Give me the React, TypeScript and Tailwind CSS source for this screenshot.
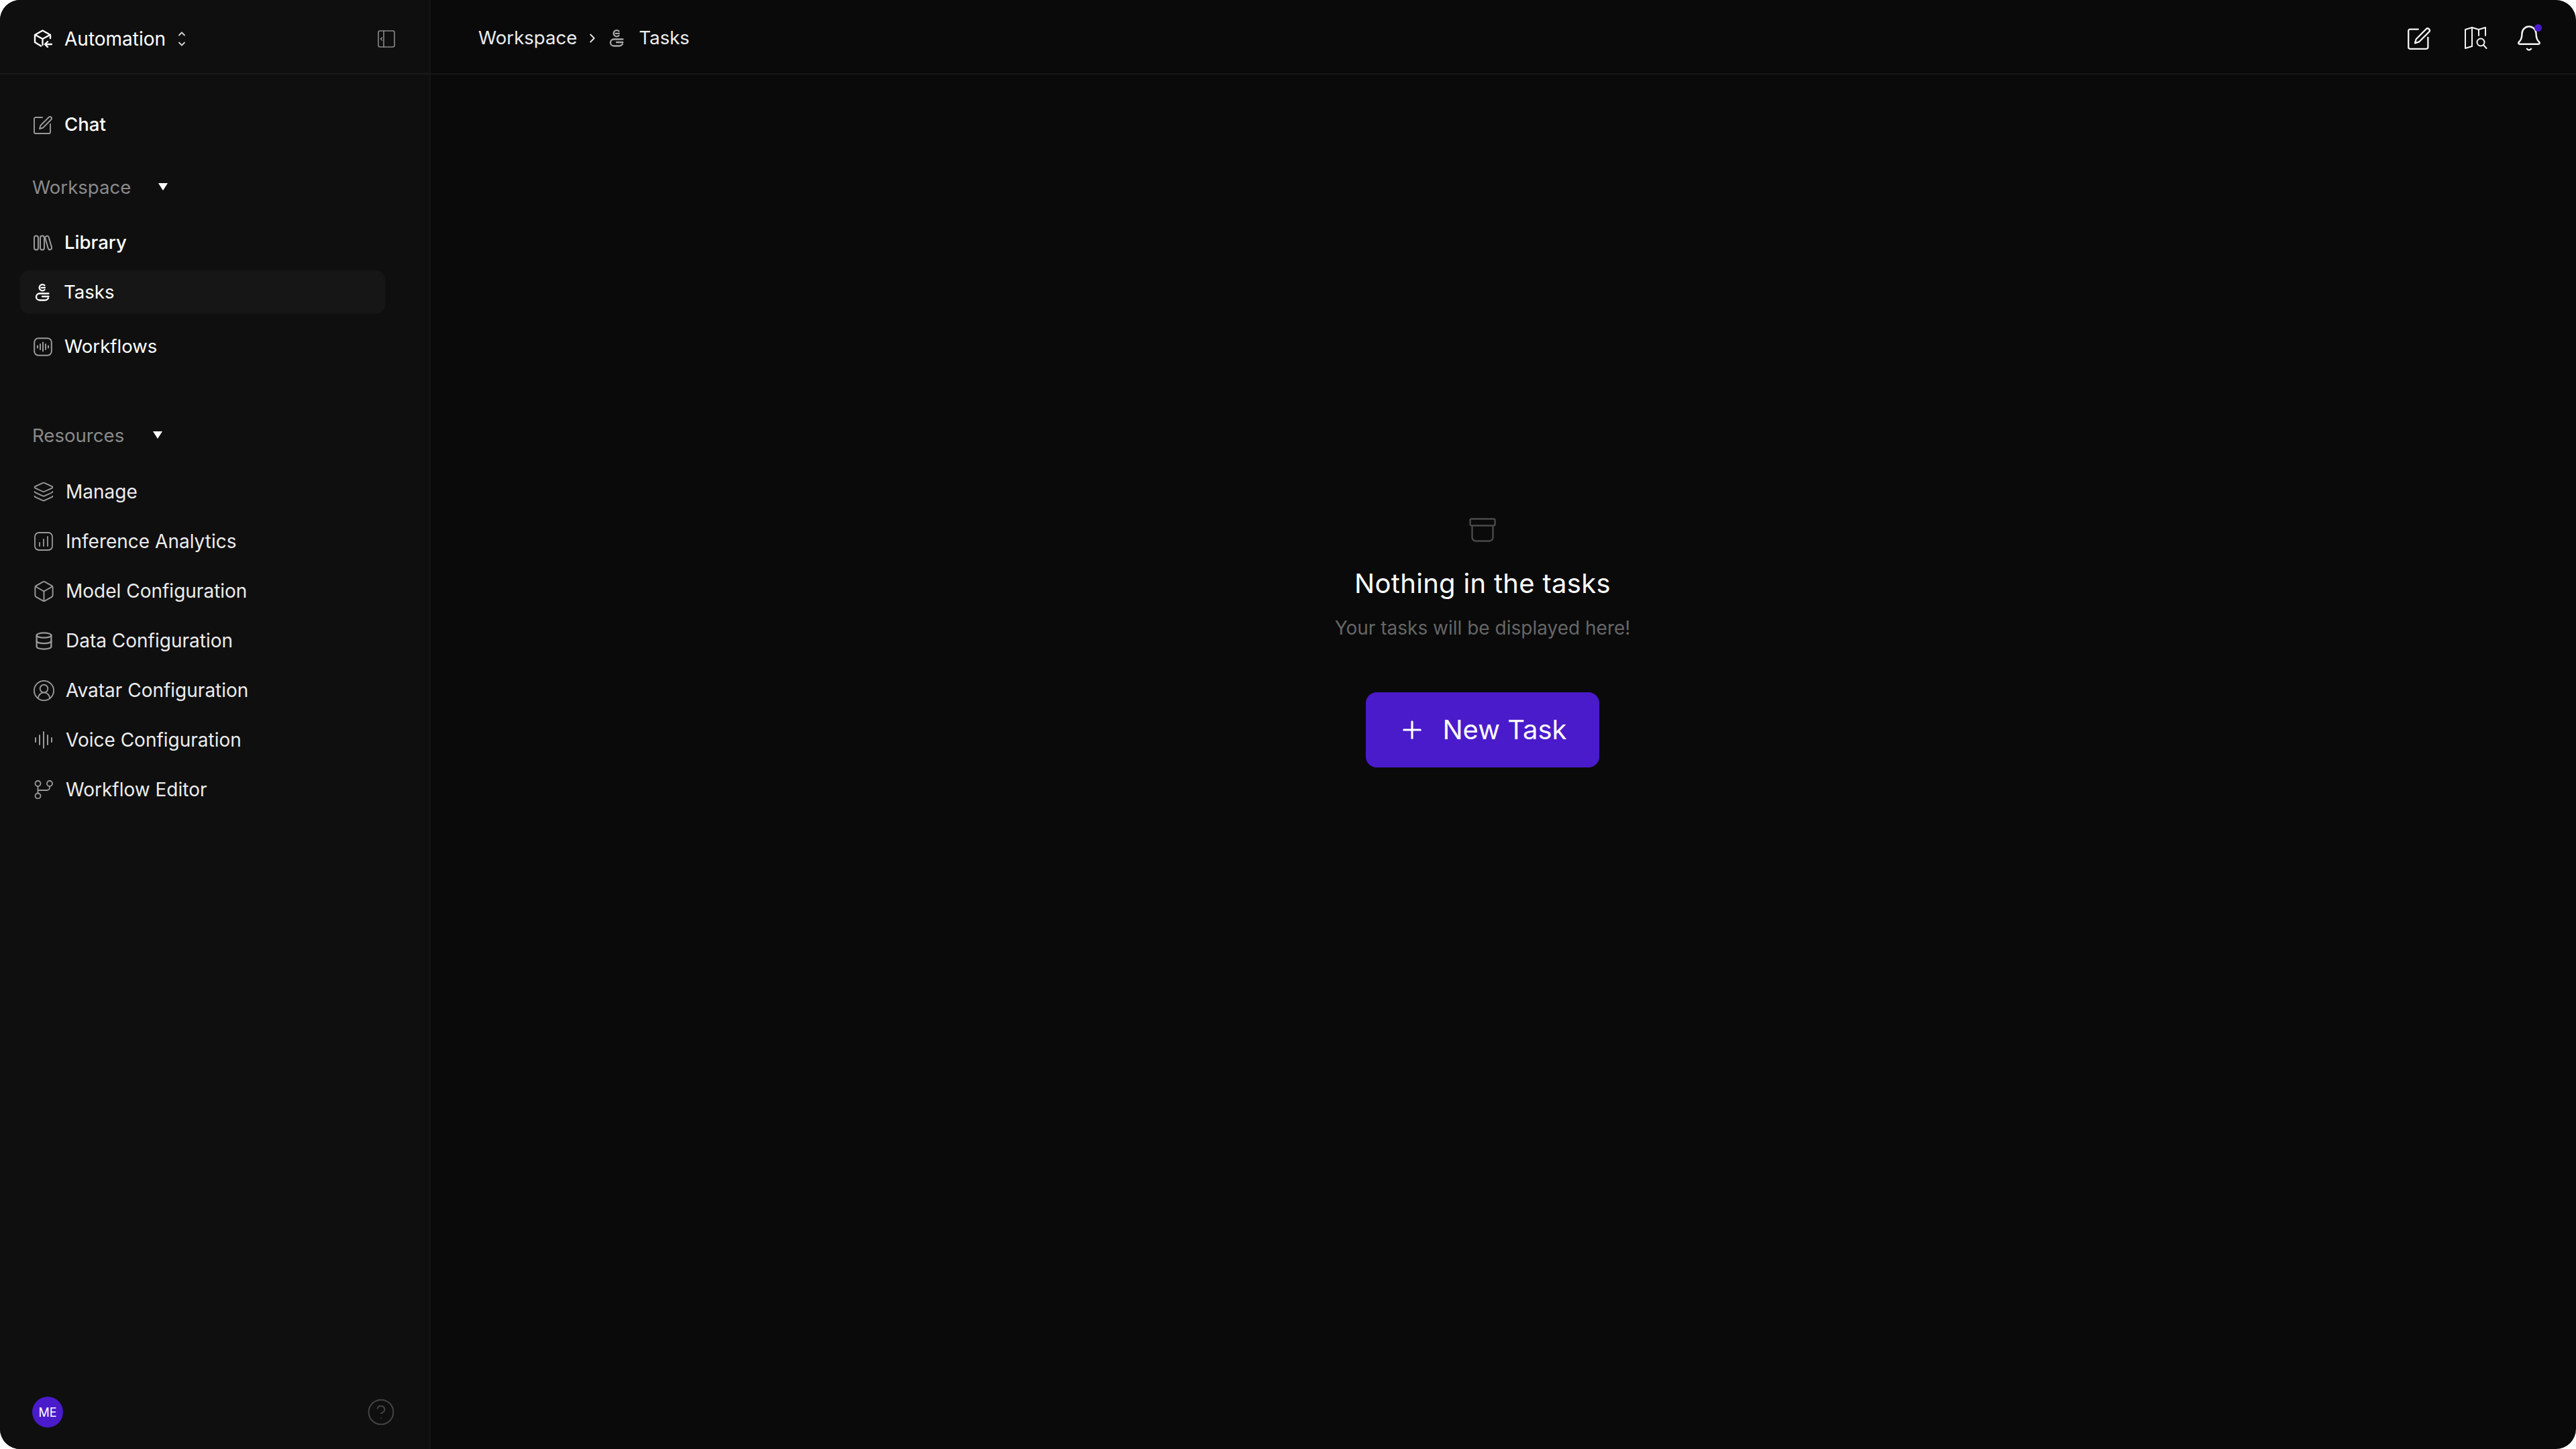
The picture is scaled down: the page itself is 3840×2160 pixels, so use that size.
import { Plus, ChevronRight, Bell, Layers, Box, Database, CircleUserRound, CircleHelp } from "lucide-react";
import type { ReactNode } from "react";

function AutomationIcon() {
  return (
    <svg viewBox="0 0 28 28" className="h-7 w-7 shrink-0" fill="none" stroke="#fff" strokeWidth="2.4" strokeLinecap="round" strokeLinejoin="round">
      <path d="M25 13V8L13.5 1.5 2 8v11l9 5.5" />
      <path d="M2.500 8l11 6 11-6M13.500 14v9" />
      <path d="M27 22h-9M21 18l-4 4 4 4" />
    </svg>
  );
}

function TasksIcon({ className = "text-white" }: { className?: string }) {
  return (
    <svg viewBox="0 0 22 26" className={`h-[26px] w-[22px] shrink-0 ${className}`} fill="none" stroke="currentColor" strokeWidth="2.300" strokeLinecap="round">
      <path d="M14.500 2.500a4.600 4.600 0 1 0 0 6.500M9.500 5.800h5.500" />
      <path d="M20.500 14.500H7a5 5 0 0 0 0 10h7c3 0 5-1 6-3M11 19h9.500" />
    </svg>
  );
}

function LibraryIcon() {
  return (
    <svg viewBox="0 0 28 24" className="h-6 w-7 shrink-0" fill="none" stroke="#9a9a9a" strokeWidth="2" strokeLinejoin="round">
      <rect x="1" y="1.500" width="6" height="21" rx="3" />
      <rect x="10" y="1.500" width="6" height="21" rx="3" />
      <rect x="19.500" y="1.500" width="5.500" height="21" rx="2.750" transform="rotate(-16 22 12)" />
    </svg>
  );
}

function WaveBoxIcon() {
  return (
    <svg viewBox="0 0 28 28" className="h-7 w-7 shrink-0" fill="none" stroke="#9a9a9a" strokeWidth="2" strokeLinecap="round">
      <rect x="1.200" y="1.200" width="25.600" height="25.600" rx="6" />
      <path d="M6 12.500v3M10 10v8M14 7.500v13M18 10v8M22 12.500v3" />
    </svg>
  );
}

function SquarePenIcon({ stroke = "#9a9a9a", size = "h-7 w-7" }: { stroke?: string; size?: string }) {
  return (
    <svg viewBox="0 0 28 28" className={`${size} shrink-0`} fill="none" stroke={stroke} strokeWidth="1.900" strokeLinecap="round" strokeLinejoin="round">
      <path d="M13 3H3a2 2 0 0 0-2 2v20a2 2 0 0 0 2 2h20a2 2 0 0 0 2-2V13" />
      <path d="M23 2.500a2.500 2.500 0 0 1 3.500 3.500L14 18.500l-5 1.500 1.500-5z" />
    </svg>
  );
}

function AnalyticsIcon() {
  return (
    <svg viewBox="0 0 28 28" className="h-7 w-7 shrink-0" fill="none" stroke="#9a9a9a" strokeWidth="1.800" strokeLinecap="round">
      <rect x="1" y="1" width="26" height="26" rx="6" />
      <path d="M8 16v5M14 11v10M20 7v14" />
    </svg>
  );
}

function VoiceIcon() {
  return (
    <svg viewBox="0 0 28 28" className="h-7 w-7 shrink-0" fill="none" stroke="#9a9a9a" strokeWidth="2" strokeLinecap="round">
      <path d="M2 11v6M8 7v14M14 2v24M20 7v14M26 11v6" />
    </svg>
  );
}

function BranchIcon() {
  return (
    <svg viewBox="0 0 28 28" className="h-7 w-7 shrink-0" fill="none" stroke="#9a9a9a" strokeWidth="1.800" strokeLinecap="round">
      <circle cx="5.500" cy="5" r="4" />
      <circle cx="23" cy="5" r="4" />
      <circle cx="5.500" cy="23.500" r="4" />
      <path d="M5.500 9v10.500M23 9v2a4 4 0 0 1-4 4H5.500" />
    </svg>
  );
}

function UpDownIcon() {
  return (
    <svg viewBox="0 0 12 24" className="h-6 w-3 shrink-0" fill="none" stroke="#d4d4d4" strokeWidth="1.800" strokeLinecap="round" strokeLinejoin="round">
      <path d="M2 6.500l4-4 4 4M2 17.500l4 4 4-4" />
    </svg>
  );
}

function PanelIcon() {
  return (
    <svg viewBox="0 0 26 26" className="h-[26px] w-[26px]" fill="none" stroke="#8a8a8a" strokeWidth="1.600" strokeLinecap="round" strokeLinejoin="round">
      <rect x="1" y="1" width="24" height="24" rx="2.500" />
      <path d="M9 1v24M6.500 11l-2 2 2 2" />
    </svg>
  );
}

function MapSearchIcon() {
  return (
    <svg viewBox="0 0 34 34" className="h-[34px] w-[34px] shrink-0" fill="none" stroke="#f5f5f5" strokeWidth="2" strokeLinecap="round" strokeLinejoin="round">
      <path d="M11 30l-10 3V5l10-3 10 3 10-3v12" transform="translate(0 -1)" />
      <path d="M11 2v27M21 4v9" />
      <circle cx="24" cy="23" r="5.500" />
      <path d="M28 27l4.500 5" />
    </svg>
  );
}

function ArchiveIcon() {
  return (
    <svg viewBox="0 0 40 36" className="h-9 w-10" fill="none" stroke="#4a4a4a" strokeWidth="2.400" strokeLinejoin="round">
      <rect x="1.500" y="1.500" width="37" height="10" rx="2" />
      <path d="M4.500 11.500V29a5.500 5.500 0 0 0 5.500 5.500h20a5.500 5.500 0 0 0 5.500-5.500V11.500" />
    </svg>
  );
}

function Caret() {
  return <span className="mb-[4px] h-0 w-0 border-x-[7px] border-t-[11px] border-x-transparent border-t-white" />;
}

function NavRow({ icon, label }: { icon: ReactNode; label: string }) {
  return (
    <div className="flex h-16 items-center gap-[18px] pl-[50px] text-[28px] text-[#ececec]">
      {icon}
      <span>{label}</span>
    </div>
  );
}

const resources = [
  { label: "Manage", icon: <Layers size={32} color="#9a9a9a" strokeWidth={1.400} className="shrink-0" /> },
  { label: "Inference Analytics", icon: <AnalyticsIcon /> },
  { label: "Model Configuration", icon: <Box size={35} color="#9a9a9a" strokeWidth={1.300} className="shrink-0" /> },
  { label: "Data Configuration", icon: <Database size={29} color="#9a9a9a" strokeWidth={1.900} className="shrink-0" /> },
  { label: "Avatar Configuration", icon: <CircleUserRound size={35} color="#9a9a9a" strokeWidth={1.300} className="shrink-0" /> },
  { label: "Voice Configuration", icon: <VoiceIcon /> },
  { label: "Workflow Editor", icon: <BranchIcon /> },
];

export default function App() {
  return (
    <div className="h-screen w-screen overflow-hidden bg-white font-['Inter',sans-serif]">
      <div className="flex h-full overflow-hidden rounded-[30px] bg-[#0a0a0a]">
        <aside className="flex w-[642px] shrink-0 flex-col border-r-2 border-[#161616] bg-[#0f0f0f]">
          <div className="flex h-[111px] shrink-0 items-center border-b-2 border-[#1a1a1a] pl-[50px] pr-[51px] pt-[6px]">
            <AutomationIcon />
            <span className="ml-[18px] text-[28px] text-white">Automation</span>
            <span className="ml-[18px]"><UpDownIcon /></span>
            <span className="ml-auto"><PanelIcon /></span>
          </div>

          <nav className="flex flex-1 flex-col pt-[43px]">
            <div className="flex h-16 items-center gap-[18px] pl-[50px] text-[27.6px] font-medium text-white">
              <SquarePenIcon />
              <span>Chat</span>
            </div>

            <div className="mt-[42px] flex h-10 items-center pl-[48px] text-[27.6px] text-[#8a8a8a]">
              <span className="w-[188px]">Workspace</span>
              <Caret />
            </div>

            <div className="mt-[30px] flex h-16 items-center gap-[18px] pl-[50px] text-[27.6px] font-medium text-white">
              <LibraryIcon />
              <span>Library</span>
            </div>
            <div className="mx-[30px] mt-[9px] flex h-[65px] w-[544px] items-center gap-[21px] rounded-[14px] bg-[#161616] pl-[22px] text-[27.6px] text-white">
              <TasksIcon />
              <span>Tasks</span>
            </div>
            <div className="mt-[17px] flex h-16 items-center gap-[18px] pl-[50px] text-[27.6px] text-white">
              <WaveBoxIcon />
              <span>Workflows</span>
            </div>

            <div className="mt-[81px] flex h-10 items-center pl-[48px] text-[27.6px] text-[#8a8a8a]">
              <span className="w-[180px]">Resources</span>
              <Caret />
            </div>

            <div className="mt-[31px] flex flex-col gap-[10px]">
              {resources.map((item) => (
                <NavRow key={item.label} icon={<span className="flex w-[30px] shrink-0 justify-center">{item.icon}</span>} label={item.label} />
              ))}
            </div>

            <div className="mt-auto flex items-center justify-between pb-[32px] pl-[48px] pr-[50px]">
              <div className="flex h-[46px] w-[46px] items-center justify-center rounded-full bg-[#4a1bcb] text-[18px] text-white">ME</div>
              <CircleHelp size={44} color="#444444" strokeWidth={1.100} />
            </div>
          </nav>
        </aside>

        <main className="flex min-w-0 flex-1 flex-col">
          <header className="flex h-[111px] shrink-0 items-center border-b-2 border-[#161616] pl-[71px] pr-[49px] pt-[5px] text-[27.6px] text-[#ececec]">
            <span>Workspace</span>
            <ChevronRight size={22} color="#e5e5e5" strokeWidth={2} className="ml-[12px]" />
            <span className="ml-[14px]"><TasksIcon className="text-[#a8a8a8]" /></span>
            <span className="ml-[22px]">Tasks</span>
            <div className="ml-auto flex items-center">
              <SquarePenIcon stroke="#f5f5f5" size="h-[34px] w-[34px]" />
              <span className="ml-[51px]"><MapSearchIcon /></span>
              <div className="relative ml-[41px]">
                <Bell size={42} color="#f5f5f5" strokeWidth={1.400} />
                <span className="absolute right-[2px] top-0 h-[11px] w-[11px] rounded-full bg-[#4a1bcb]" />
              </div>
            </div>
          </header>

          <div className="flex flex-1 flex-col items-center pr-[62px] pt-[661px]">
            <ArchiveIcon />
            <h2 className="mt-[38px] text-[40px] leading-[48px] tracking-[0.3px] text-white">Nothing in the tasks</h2>
            <p className="mt-[21px] text-[28px] leading-[42px] text-[#666666]">Your tasks will be displayed here!</p>
            <button className="mt-[75px] flex h-[112px] w-[348px] items-center justify-center gap-[24px] rounded-[16px] bg-[#4a1bcb] text-[40px] text-white">
              <Plus size={42} strokeWidth={1.800} />
              <span>New Task</span>
            </button>
          </div>
        </main>
      </div>
    </div>
  );
}
